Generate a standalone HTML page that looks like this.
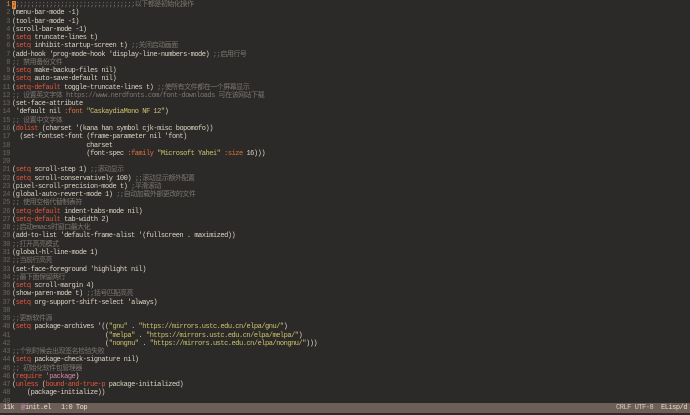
<!DOCTYPE html>
<html><head><meta charset="utf-8"><style>
html,body{margin:0;padding:0;width:690px;height:415px;overflow:hidden;background:#2c2a28;}
#ed{position:absolute;left:0;top:0;width:690px;height:403px;background:#2b2a28;}
#gut{position:absolute;left:0;top:0;width:10px;height:403px;background:#2f2d2b;}
pre{margin:0;font-family:"Liberation Mono","Noto Sans CJK SC",monospace;font-size:7px;letter-spacing:-0.48px;line-height:8.27px;color:#ddd3c3;white-space:pre;}
#nums{position:absolute;left:0;top:1px;width:10px;text-align:right;color:#6a645e;}
#code{position:absolute;left:12px;top:1px;}
.k{color:#e2553e}.c{color:#7d7670}.s{color:#cdc46c}.o{color:#e0703e}.q{color:#d686a6}
.cur{background:#e08a3a;color:#2b2a28}
#ml{position:absolute;left:0;top:403px;width:690px;height:10px;background:#6b5f57;font-family:"Liberation Mono",monospace;font-size:7px;letter-spacing:-0.48px;line-height:10px;color:#e8dccc;}
#ml2{position:absolute;left:0;top:413px;width:690px;height:2px;background:#2b2a28;}
</style></head><body>
<div id="ed"><div id="gut"></div>
<pre id="nums"><span style="color:#e8883a">1</span>
2
3
4
5
6
7
8
9
10
11
12
13
14
15
16
17
18
19
20
21
22
23
24
25
26
27
28
29
30
31
32
33
34
35
36
37
38
39
40
41
42
43
44
45
46
47
48
49</pre>
<pre id="code"><span class="cur">;</span><span class="c">;;;;;;;;;;;;;;;;;;;;;;;;;;;;;;;;以下都是初始化操作</span>
(menu-bar-mode -1)
(tool-bar-mode -1)
(scroll-bar-mode -1)
(<span class="k">setq</span> truncate-lines t)
(<span class="k">setq</span> inhibit-startup-screen t) <span class="c">;;关闭启动画面</span>
(add-hook 'prog-mode-hook 'display-line-numbers-mode) <span class="c">;;启用行号</span>
<span class="c">;; 禁用备份文件</span>
(<span class="k">setq</span> make-backup-files nil)
(<span class="k">setq</span> auto-save-default nil)
(<span class="k">setq-default</span> toggle-truncate-lines t) <span class="c">;;使所有文件都在一个屏幕显示</span>
<span class="c">;; 设置英文字体 https://www.nerdfonts.com/font-downloads 可在该网站下载</span>
(set-face-attribute
 'default nil <span class="o">:font</span> <span class="s">"CaskaydiaMono NF 12"</span>)
<span class="c">;; 设置中文字体</span>
(<span class="k">dolist</span> (charset '(kana han symbol cjk-misc bopomofo))
  (set-fontset-font (frame-parameter nil 'font)
                    charset
                    (font-spec <span class="o">:family</span> <span class="s">"Microsoft Yahei"</span> <span class="o">:size</span> 16)))

(<span class="k">setq</span> scroll-step 1) <span class="c">;;滚动显示</span>
(<span class="k">setq</span> scroll-conservatively 100) <span class="c">;;滚动显示额外配置</span>
(pixel-scroll-precision-mode t) <span class="c">;平滑滚动</span>
(global-auto-revert-mode 1) <span class="c">;;自动加载外部更改的文件</span>
<span class="c">;; 使用空格代替制表符</span>
(<span class="k">setq-default</span> indent-tabs-mode nil)
(<span class="k">setq-default</span> tab-width 2)
<span class="c">;;启动emacs时窗口最大化</span>
(add-to-list 'default-frame-alist '(fullscreen . maximized))
<span class="c">;;打开高亮模式</span>
(global-hl-line-mode 1)
<span class="c">;;当前行高亮</span>
(set-face-foreground 'highlight nil)
<span class="c">;;最下面保留两行</span>
(<span class="k">setq</span> scroll-margin 4)
(show-paren-mode t) <span class="c">;;括号匹配高亮</span>
(<span class="k">setq</span> org-support-shift-select 'always)

<span class="c">;;更新软件源</span>
(<span class="k">setq</span> package-archives '((<span class="s">"gnu"</span> . <span class="s">"https://mirrors.ustc.edu.cn/elpa/gnu/"</span>)
                         (<span class="s">"melpa"</span> . <span class="s">"https://mirrors.ustc.edu.cn/elpa/melpa/"</span>)
                         (<span class="s">"nongnu"</span> . <span class="s">"https://mirrors.ustc.edu.cn/elpa/nongnu/"</span>)))
<span class="c">;;个别时候会出现签名检验失败</span>
(<span class="k">setq</span> package-check-signature nil)
<span class="c">;; 初始化软件包管理器</span>
(<span class="k">require</span> <span class="q">'package</span>)
(<span class="k">unless</span> (<span class="k">bound-and-true-p</span> package-initialized)
    (package-initialize))
</pre></div>
<div id="ml"><span style="position:absolute;left:3px">11k</span><span style="position:absolute;left:21px;color:#d68fc8">@</span><span style="position:absolute;left:25px">init.el</span><span style="position:absolute;left:61px">1:0 Top</span><span style="position:absolute;left:616px;color:#d8ccbc">CRLF UTF-8</span><span style="position:absolute;left:661px">ELisp/d</span></div>
<div id="ml2"></div>
</body></html>
